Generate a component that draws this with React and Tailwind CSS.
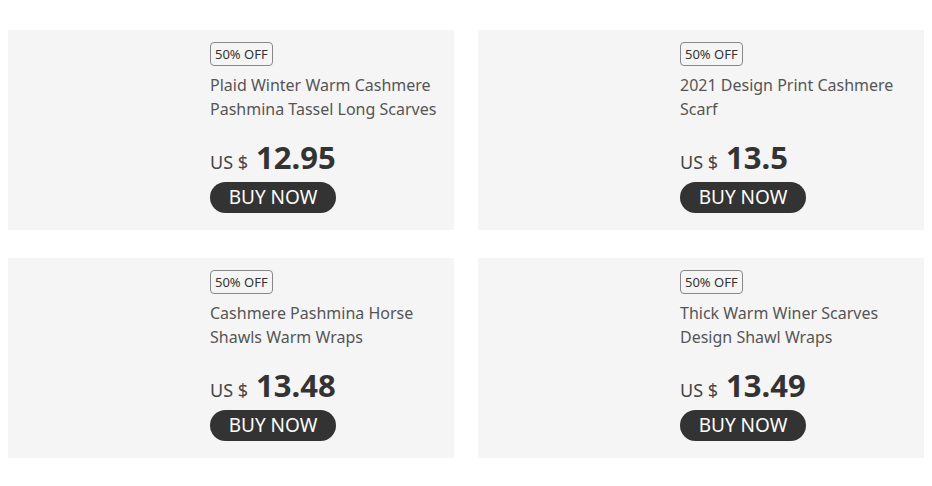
import React from "react";

const products = [
  { id: 1, title: "Plaid Winter Warm Cashmere Pashmina Tassel Long Scarves", price: "12.95" },
  { id: 2, title: "2021 Design Print Cashmere Scarf", price: "13.5" },
  { id: 3, title: "Cashmere Pashmina Horse Shawls Warm Wraps", price: "13.48" },
  { id: 4, title: "Thick Warm Winer Scarves Design Shawl Wraps", price: "13.49" },
];

export default function App() {
  return (
    <div
      className="w-[932px] h-[486px] bg-white pl-[8px] pt-[30px]"
      style={{ fontFamily: '"Noto Sans", "Open Sans", sans-serif' }}
    >
      <div className="grid grid-cols-[446px_446px] gap-x-[24px] gap-y-[28px]">
        {products.map((p) => (
          <div key={p.id} className="h-[200px] bg-[#f5f5f5] pl-[202px] pt-[11px] pr-4">
            <span className="inline-block border border-[#888] rounded-[4px] px-[4px] text-[13px] leading-[22px] text-[#333]">
              50% OFF
            </span>
            <p className="mt-[7px] text-[16px] leading-[24px] text-[#555] max-w-[236px]">
              {p.title}
            </p>
            <div className="mt-[17px] flex items-baseline gap-[8px] h-[38px]">
              <span className="text-[18px] text-[#444]">US $</span>
              <span className="text-[31px] font-bold text-[#333] leading-[38px]">{p.price}</span>
            </div>
            <button className="mt-[6px] w-[126px] h-[31px] rounded-full bg-[#333] text-white text-[19px] leading-[31px] flex items-center justify-center">
              BUY NOW
            </button>
          </div>
        ))}
      </div>
    </div>
  );
}
